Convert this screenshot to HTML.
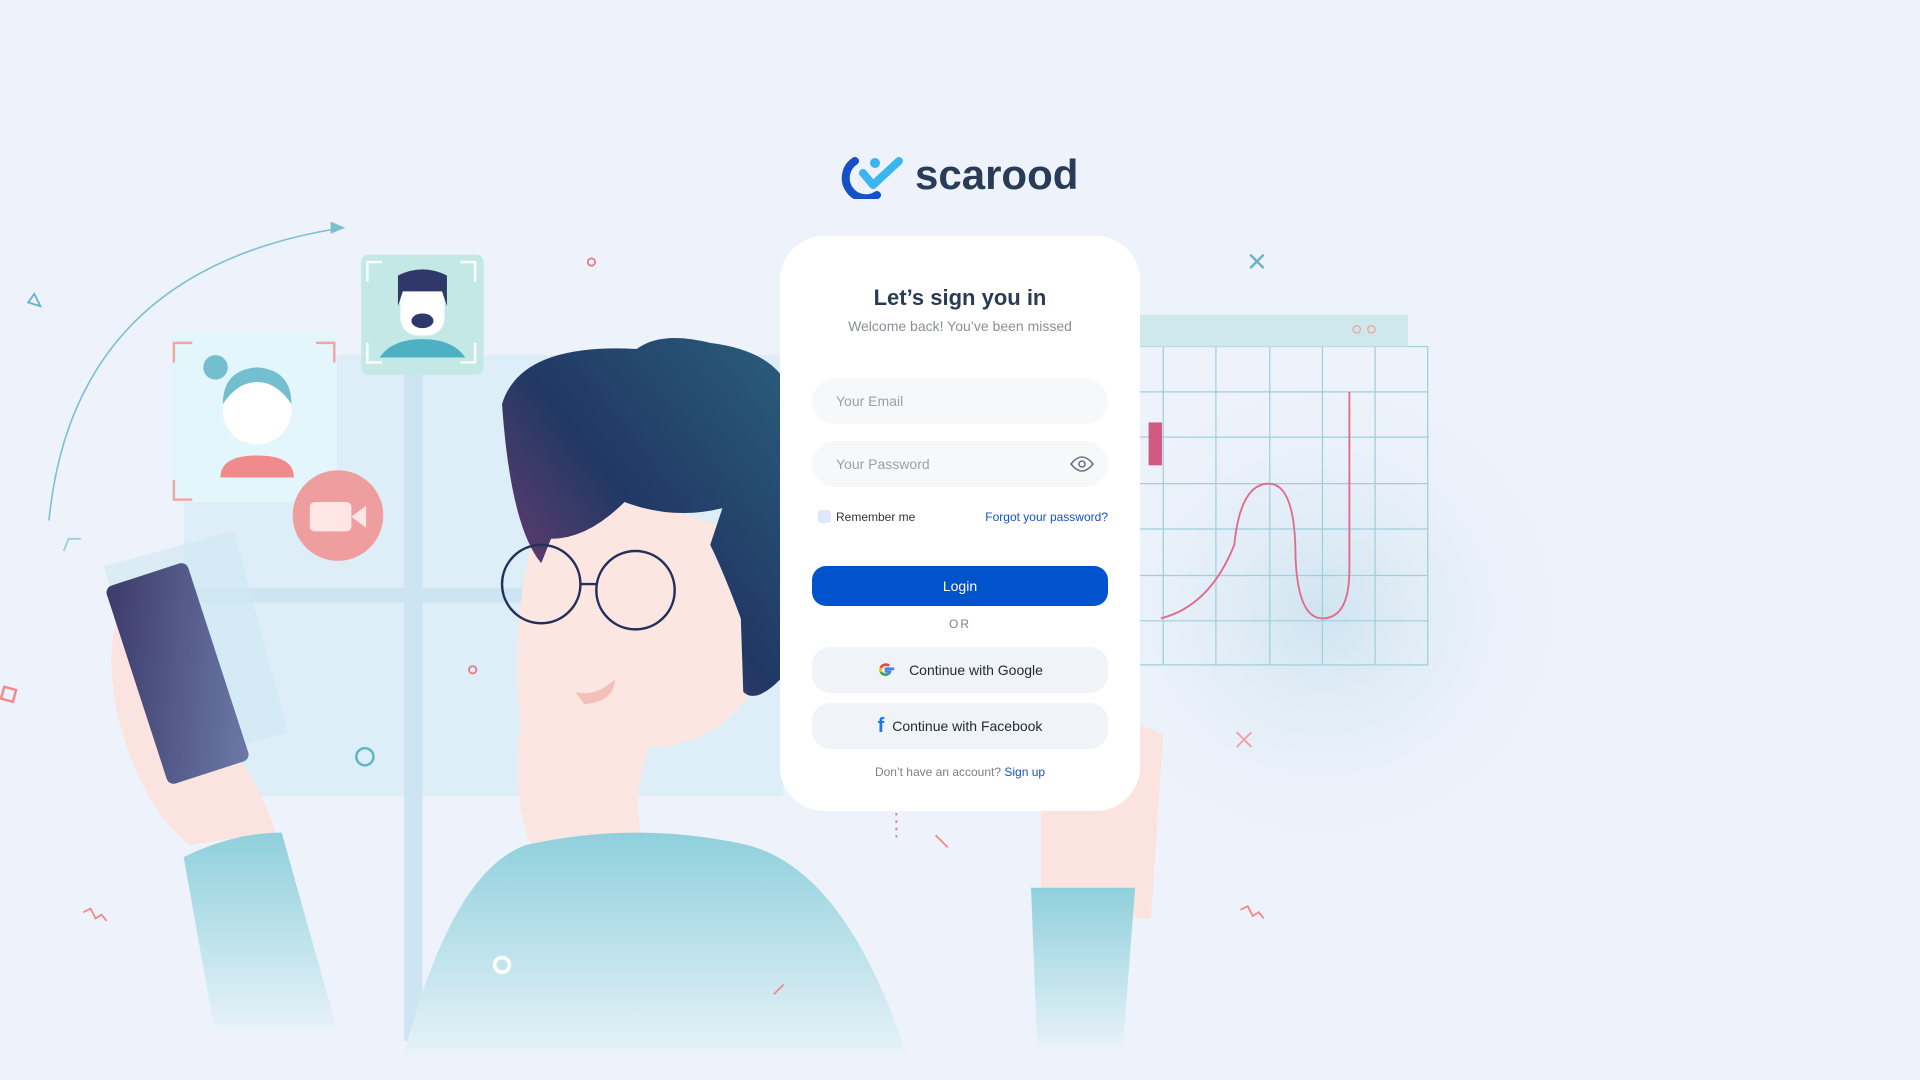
<!DOCTYPE html>
<html><head><meta charset="utf-8"><style>
*{margin:0;padding:0;box-sizing:border-box}
body{width:1920px;height:1080px;overflow:hidden;background:#eef3fb;font-family:"Liberation Sans",sans-serif;position:relative}
svg.bg{position:absolute;left:0;top:0}
.logo{position:absolute;left:841px;top:150px;height:50px;display:flex;align-items:center}
.logo span{font-size:42px;font-weight:bold;color:#2a3c55;margin-left:8px}
.card{position:absolute;left:780px;top:236px;width:360px;height:575px;background:#fff;border-radius:44px}
.t{position:absolute;left:0;width:100%;text-align:center}
.inp{position:absolute;left:32px;width:296px;height:46px;border-radius:23px;background:#f7f8fa;font-size:14px;color:#9aa0a8;padding:15px 0 0 24px}
.btn{position:absolute;left:32px;width:296px;height:46px;border-radius:18px;background:#f0f3f7;font-size:14px;color:#1f2937;display:flex;align-items:center;justify-content:center}
</style></head><body>
<svg class="bg" width="1920" height="1080" viewBox="0 0 1568 882" preserveAspectRatio="none">
<defs>
<radialGradient id="rg" cx="0.5" cy="0.5" r="0.5"><stop offset="0" stop-color="#cfe4f0"/><stop offset="1" stop-color="#eef3fb" stop-opacity="0"/></radialGradient>
<linearGradient id="sh" x1="0" y1="0" x2="0" y2="1"><stop offset="0" stop-color="#8fd0dc"/><stop offset="1" stop-color="#e6f2f8"/></linearGradient>
<linearGradient id="hair" x1="0" y1="1" x2="1" y2="0"><stop offset="0" stop-color="#8a3f74"/><stop offset="0.5" stop-color="#213864"/><stop offset="1" stop-color="#2a5d7c"/></linearGradient>
<linearGradient id="ph" x1="0" y1="0" x2="1" y2="1"><stop offset="0" stop-color="#3c3a6a"/><stop offset="1" stop-color="#6c7aa8"/></linearGradient>
</defs>
<ellipse cx="1080" cy="500" rx="230" ry="220" fill="url(#rg)"/>
<rect x="150" y="290" width="490" height="360" fill="#d8ecf7" opacity="0.8"/>
<rect x="330" y="290" width="15" height="560" fill="#cde5f3"/>
<rect x="150" y="480" width="490" height="12" fill="#cde5f3"/>
<rect x="140" y="272" width="135" height="138" fill="#e3f6fb"/>
<path d="M142 296V280h15M258 280h15v16M142 392v16h15M258 408h15v-16" stroke="#f2a6a3" stroke-width="2" fill="none"/>
<circle cx="210" cy="335" r="28" fill="#fff"/><path d="M182 330q0-28 28-30q28 2 28 30q-12-18-28-18q-16 0-28 18z" fill="#74bfcf"/><circle cx="176" cy="300" r="10" fill="#74bfcf"/>
<path d="M180 390q0-18 30-18q30 0 30 18z" fill="#f08a8d"/>
<rect x="295" y="208" width="100" height="98" rx="6" fill="#c3e8e6"/>
<path d="M300 230v-16h12M376 214h12v16M300 280v16h12M376 296h12v-16" stroke="#fff" stroke-width="2" fill="none"/>
<rect x="327" y="222" width="36" height="52" rx="14" fill="#fff"/><path d="M325 250v-25q20-10 40 0v25l-4-12h-32z" fill="#2f3868"/><ellipse cx="345" cy="262" rx="9" ry="6" fill="#2f3868"/>
<path d="M310 292q10-15 35-15q25 0 35 15z" fill="#4eb1c3"/>
<circle cx="276" cy="421" r="37" fill="#ef9ea0"/><rect x="253" y="410" width="34" height="24" rx="4" fill="#fde6e3"/><path d="M287 422l12-9v18z" fill="#fde6e3"/>
<path d="M40 425Q60 220 280 186" stroke="#7cc0d0" stroke-width="1.3" fill="none"/><path d="M270 181l12 5-12 5z" fill="#7cc0d0"/>
<path d="M28 240l5 10-10-3z" stroke="#6ab3c4" fill="none" stroke-width="1.5"/>
<rect x="105" y="445" width="110" height="170" fill="#cfe8f1" opacity="0.6" transform="rotate(-15 160 530)"/>
<path d="M100 500q-15 20 -5 80q20 80 60 110l70-10q-20-60-50-80z" fill="#fbe3df"/>
<rect x="110" y="465" width="70" height="170" rx="6" fill="url(#ph)" transform="rotate(-18 145 550)"/>
<path d="M150 700q40-20 80-20l45 160h-100z" fill="url(#sh)"/>
<path d="M440 420q70-20 150 10q40 60 20 140q-30 40-80 40q-20 60 5 100h-90q-30-40-20-120q-10-80 15-170z" fill="#fbe6e2"/>
<path d="M410 330q15-50 110-45q20-15 60-5q40 5 57 25v250q-20 20-30 10l-2-60q-15-40-25-60l10-30q-40 10-80-5q-30 30-60 30l-8 20q-25 -30-32-130z" fill="url(#hair)"/>
<circle cx="442" cy="477" r="32" fill="none" stroke="#24305a" stroke-width="2"/><circle cx="519" cy="482" r="32" fill="none" stroke="#24305a" stroke-width="2"/><path d="M474 477h13" stroke="#24305a" stroke-width="2"/>
<path d="M470 565q15 5 32-10q0 18-25 20z" fill="#f5c0bb"/>
<path d="M330 860q40-150 100-170q90-20 180 0q80 20 130 170z" fill="url(#sh)"/>
<path d="M850 600q40-30 100 0l-10 150h-90z" fill="#fbe3df"/>
<path d="M842 725h85l-10 130h-70z" fill="url(#sh)"/>
<g stroke="#9ecfda" stroke-width="1" fill="none">
<rect x="930" y="283" width="236" height="260"/>
<path d="M950 283v260M993 283v260M1037 283v260M1080 283v260M1123 283v260M930 320h236M930 357h236M930 395h236M930 432h236M930 470h236M930 507h236"/></g>
<rect x="930" y="257" width="220" height="26" fill="#cfe8ec"/>
<path d="M948 505q40 -10 60-60q5-50 28-50q22 0 22 60q2 50 22 50q22 0 22-40v-145" stroke="#e06a8a" stroke-width="1.5" fill="none"/>
<rect x="938" y="345" width="11" height="35" fill="#d05a82"/>
<circle cx="1108" cy="269" r="3" fill="none" stroke="#f0a0a0"/><circle cx="1120" cy="269" r="3" fill="none" stroke="#f0a0a0"/>
<path d="M1021 208l11 11M1032 208l-11 11" stroke="#6ab3c4" stroke-width="2"/>
<path d="M1010 598l12 12M1022 598l-12 12" stroke="#f0a0a0" stroke-width="1.5"/>
<circle cx="298" cy="618" r="7" fill="none" stroke="#5eb5c3" stroke-width="2"/>
<circle cx="410" cy="788" r="6" fill="none" stroke="#fff" stroke-width="3"/>
<circle cx="483" cy="214" r="3" fill="none" stroke="#e77b87" stroke-width="1.5"/><circle cx="386" cy="547" r="3" fill="none" stroke="#e77b87" stroke-width="1.5"/>
<rect x="2" y="562" width="10" height="10" fill="none" stroke="#f08a8d" stroke-width="2" transform="rotate(15 7 567)"/>
<path d="M68 745l6-3 4 8 5-3 4 5M1013 743l6-3 4 8 5-3 4 5" stroke="#f08a8d" stroke-width="1.5" fill="none"/>
<path d="M52 450l4-10h10" stroke="#9ecfda" stroke-width="1.5" fill="none"/>
<path d="M764 682l10 10M632 812l8-8" stroke="#f08a8d" stroke-width="1.5"/>
<path d="M732 664v20" stroke="#e77b87" stroke-width="1.5" stroke-dasharray="2 4"/>
</svg>
<div class="logo"><svg width="66" height="48" viewBox="0 0 66 48"><path d="M14 10a20 20 0 1 0 22 34" stroke="#1550c8" stroke-width="8" fill="none" stroke-linecap="round"/><path d="M22 22l10 12l26-24" stroke="#3ab5ef" stroke-width="8" fill="none" stroke-linecap="round" stroke-linejoin="round"/><circle cx="34" cy="12" r="5" fill="#3ab5ef"/></svg><span>scarood</span></div>
<div class="card">
<div class="t" style="top:49px;font-size:22px;font-weight:bold;color:#2a3c55">Let’s sign you in</div>
<div class="t" style="top:82px;font-size:14px;color:#8a8f98">Welcome back! You’ve been missed</div>
<div class="inp" style="top:142px">Your Email</div>
<div class="inp" style="top:205px">Your Password<svg style="position:absolute;right:14px;top:14px" width="24" height="18" viewBox="0 0 24 18"><path d="M1 9q11-14 22 0q-11 14-22 0z" fill="none" stroke="#6b7280" stroke-width="1.6"/><circle cx="12" cy="9" r="3" fill="none" stroke="#6b7280" stroke-width="1.6"/></svg></div>
<div style="position:absolute;left:38px;top:274px;width:13px;height:13px;border-radius:3px;background:#dde9fb"></div>
<div style="position:absolute;left:56px;top:274px;font-size:12px;color:#333">Remember me</div>
<div style="position:absolute;right:32px;top:274px;font-size:12px;color:#1550c8">Forgot your password?</div>
<div class="btn" style="top:330px;height:40px;background:#0053cc;color:#fff;border-radius:14px">Login</div>
<div class="t" style="top:381px;font-size:12px;color:#7a7f88;letter-spacing:2px">OR</div>
<div class="btn" style="top:411px"><svg width="18" height="18" viewBox="0 0 18 18" style="margin-right:14px"><path d="M16 9.2c0-.6 0-1-.1-1.5H9v2.8h4a3.5 3.5 0 0 1-1.5 2.3" stroke="#4285f4" stroke-width="2.6" fill="none"/><path d="M11.5 12.8A5.5 5.5 0 0 1 3.8 11" stroke="#34a853" stroke-width="2.6" fill="none"/><path d="M3.8 11a5.5 5.5 0 0 1 0-4" stroke="#fbbc05" stroke-width="2.6" fill="none"/><path d="M3.8 7a5.5 5.5 0 0 1 8.4-2.3" stroke="#ea4335" stroke-width="2.6" fill="none"/></svg>Continue with Google</div>
<div class="btn" style="top:467px"><span style="color:#1877f2;font-weight:bold;font-size:20px;margin-right:8px">f</span>Continue with Facebook</div>
<div class="t" style="top:529px;font-size:12px;color:#7a7f88">Don’t have an account? <span style="color:#1550c8">Sign up</span></div>
</div>
</body></html>
